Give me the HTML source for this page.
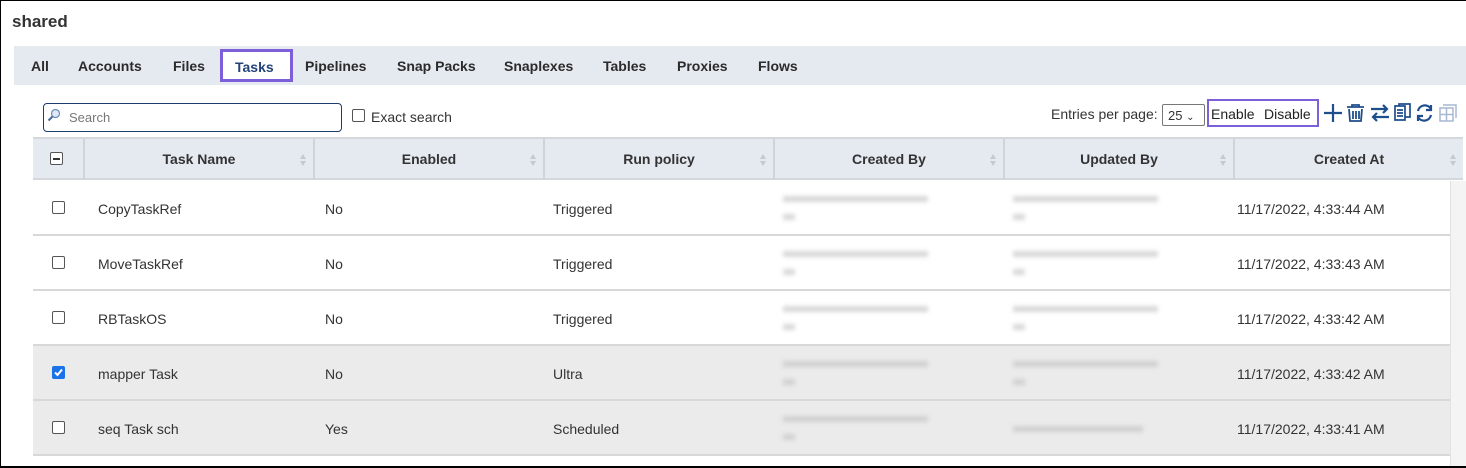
<!DOCTYPE html>
<html><head><style>
*{margin:0;padding:0;box-sizing:border-box}
body{width:1466px;height:468px;overflow:hidden;background:#fff;font-family:"Liberation Sans",sans-serif;color:#333;position:relative}
.a{position:absolute;white-space:nowrap}
.frame{position:absolute;left:0;top:0;width:1466px;height:468px;border:1px solid #000;border-right:none;border-bottom:2px solid #000}
.tabbar{position:absolute;left:14px;top:46px;width:1452px;height:39px;background:#e5e9f0}
.tab{position:absolute;top:58px;font-size:14px;font-weight:bold;color:#2b2b2b}
.hdr{position:absolute;left:33px;top:137px;width:1430px;height:43px;background:#e5e9f0;border-top:2px solid #d4d7dc;border-bottom:2px solid #d4d7dc}
.hc{position:absolute;top:0;height:41px;border-left:2px solid #d0d4da;font-size:14px;font-weight:bold;color:#333;text-align:center;line-height:40px}
.sort{position:absolute;right:6px;top:13px;width:8px;height:16px}
.row{position:absolute;left:33px;width:1417px;height:55px;border-bottom:2px solid #d8d8d8}
.cell{position:absolute;font-size:14px;color:#333;top:20px}
.cb{position:absolute;left:19px;top:20px;width:13px;height:13px;border:1px solid #555;border-radius:2px;background:#fff}
.blur{position:absolute;background:#d8d8d8;filter:blur(2px)}
</style></head><body>
<div class="a" style="left:12px;top:12px;font-size:17px;font-weight:bold;color:#333">shared</div>
<div class="tabbar"></div>
<div class="a" style="left:220px;top:49px;width:73px;height:33px;background:#fff;border:3px solid #7d5fd9"></div>
<div class="a tab" style="left:31px">All</div>
<div class="a tab" style="left:78px">Accounts</div>
<div class="a tab" style="left:173px">Files</div>
<div class="a tab" style="left:235px;top:59px;color:#24437a">Tasks</div>
<div class="a tab" style="left:305px">Pipelines</div>
<div class="a tab" style="left:397px">Snap Packs</div>
<div class="a tab" style="left:504px">Snaplexes</div>
<div class="a tab" style="left:603px">Tables</div>
<div class="a tab" style="left:677px">Proxies</div>
<div class="a tab" style="left:758px">Flows</div>

<div class="a" style="left:43px;top:103px;width:299px;height:29px;border:1px solid #1f3c6e;border-radius:4px"></div>
<svg class="a" style="left:47px;top:108px" width="14" height="14" viewBox="0 0 14 14"><circle cx="8.5" cy="5.5" r="4" fill="#dfe8f5" stroke="#6b8bb8" stroke-width="1.2"/><path d="M5.5 8.5L1.5 12.5" stroke="#4a6a99" stroke-width="2"/></svg>
<div class="a" style="left:69px;top:110px;font-size:13px;color:#777">Search</div>
<div class="a" style="left:352px;top:109px;width:13px;height:13px;border:1px solid #555;border-radius:2px"></div>
<div class="a" style="left:371px;top:109px;font-size:14px;color:#333">Exact search</div>

<div class="a" style="left:1051px;top:106px;font-size:14px;color:#333">Entries per page:</div>
<div class="a" style="left:1162px;top:104px;width:43px;height:22px;border:1px solid #777;border-radius:2px;font-size:13px;padding:3px 0 0 5px">25 <span style="font-size:10px">&#8964;</span></div>
<div class="a" style="left:1207px;top:99px;width:112px;height:28px;border:2px solid #7d5fd9"></div>
<div class="a" style="left:1211px;top:106px;font-size:14px;color:#222">Enable</div>
<div class="a" style="left:1264px;top:106px;font-size:14px;color:#222">Disable</div>
<svg class="a" style="left:1323px;top:103px" width="136" height="20" viewBox="0 0 136 20" fill="none" stroke="#1f4e8c" stroke-width="2.2">
<path d="M10 1V19M1 10H19"/>
<path d="M24 4H41M29 4V2H36V4M26 6L27 18H38L39 6M30 8V16M33 8V16M36 8V16" stroke-width="1.8"/>
<path d="M48 6H64M60 2L64 6L60 10M66 14H50M54 10L50 14L54 18"/>
<path d="M72 3H82V17H72ZM76 3V1H87V14H82M74 7H80M74 10H80M74 13H80" stroke-width="1.7"/>
<path d="M108 6A7 7 0 0 0 95 8M95 14A7 7 0 0 0 108 12M108 2V7H103M95 18V13H100"/>
<path d="M117 5H130V18H117ZM120 2H133V15M123.5 5V18M117 11.5H130" stroke="#a7b8d2" stroke-width="1.5"/>
</svg>

<div class="hdr">
<div class="hc" style="left:0;width:50px;border-left:none"><div style="position:absolute;left:17px;top:13px;width:13px;height:13px;border:1px solid #555;border-radius:2px;background:#fff"><div style="position:absolute;left:2px;top:5px;width:7px;height:1.5px;background:#333"></div></div></div>
<div class="hc" style="left:50px;width:230px">Task Name<svg class="sort" viewBox="0 0 8 16"><path d="M4 2L7 7H1ZM4 14L7 9H1Z" fill="#c5c9cf"/></svg></div>
<div class="hc" style="left:280px;width:230px">Enabled<svg class="sort" viewBox="0 0 8 16"><path d="M4 2L7 7H1ZM4 14L7 9H1Z" fill="#c5c9cf"/></svg></div>
<div class="hc" style="left:510px;width:230px">Run policy<svg class="sort" viewBox="0 0 8 16"><path d="M4 2L7 7H1ZM4 14L7 9H1Z" fill="#c5c9cf"/></svg></div>
<div class="hc" style="left:740px;width:230px">Created By<svg class="sort" viewBox="0 0 8 16"><path d="M4 2L7 7H1ZM4 14L7 9H1Z" fill="#c5c9cf"/></svg></div>
<div class="hc" style="left:970px;width:230px">Updated By<svg class="sort" viewBox="0 0 8 16"><path d="M4 2L7 7H1ZM4 14L7 9H1Z" fill="#c5c9cf"/></svg></div>
<div class="hc" style="left:1200px;width:230px">Created At<svg class="sort" viewBox="0 0 8 16"><path d="M4 2L7 7H1ZM4 14L7 9H1Z" fill="#c5c9cf"/></svg></div>
</div>
<div class="a" style="left:1450px;top:181px;width:16px;height:285px;background:#f4f4f4;border-left:1px solid #e2e2e2"></div>

<div class="row" style="top:181px">
<div class="cb"></div><div class="cell" style="left:65px">CopyTaskRef</div><div class="cell" style="left:292px">No</div><div class="cell" style="left:520px">Triggered</div>
<div class="blur" style="left:750px;top:15px;width:145px;height:6px"></div><div class="blur" style="left:750px;top:33px;width:12px;height:6px"></div>
<div class="blur" style="left:980px;top:15px;width:145px;height:6px"></div><div class="blur" style="left:980px;top:33px;width:12px;height:6px"></div>
<div class="cell" style="left:1204px">11/17/2022, 4:33:44 AM</div></div>
<div class="row" style="top:236px">
<div class="cb"></div><div class="cell" style="left:65px">MoveTaskRef</div><div class="cell" style="left:292px">No</div><div class="cell" style="left:520px">Triggered</div>
<div class="blur" style="left:750px;top:15px;width:145px;height:6px"></div><div class="blur" style="left:750px;top:33px;width:12px;height:6px"></div>
<div class="blur" style="left:980px;top:15px;width:145px;height:6px"></div><div class="blur" style="left:980px;top:33px;width:12px;height:6px"></div>
<div class="cell" style="left:1204px">11/17/2022, 4:33:43 AM</div></div>
<div class="row" style="top:291px">
<div class="cb"></div><div class="cell" style="left:65px">RBTaskOS</div><div class="cell" style="left:292px">No</div><div class="cell" style="left:520px">Triggered</div>
<div class="blur" style="left:750px;top:15px;width:145px;height:6px"></div><div class="blur" style="left:750px;top:33px;width:12px;height:6px"></div>
<div class="blur" style="left:980px;top:15px;width:145px;height:6px"></div><div class="blur" style="left:980px;top:33px;width:12px;height:6px"></div>
<div class="cell" style="left:1204px">11/17/2022, 4:33:42 AM</div></div>
<div class="row" style="top:346px;background:#ebebeb">
<div class="cb" style="background:#1a73e8;border-color:#1a73e8"><svg width="11" height="11" viewBox="0 0 11 11" style="position:absolute;left:0;top:0"><path d="M2 5.5L4.5 8L9 2.5" stroke="#fff" stroke-width="2" fill="none"/></svg></div><div class="cell" style="left:65px">mapper Task</div><div class="cell" style="left:292px">No</div><div class="cell" style="left:520px">Ultra</div>
<div class="blur" style="left:750px;top:15px;width:145px;height:6px;background:#d0d0d0"></div><div class="blur" style="left:750px;top:33px;width:12px;height:6px;background:#d0d0d0"></div>
<div class="blur" style="left:980px;top:15px;width:145px;height:6px;background:#d0d0d0"></div><div class="blur" style="left:980px;top:33px;width:12px;height:6px;background:#d0d0d0"></div>
<div class="cell" style="left:1204px">11/17/2022, 4:33:42 AM</div></div>
<div class="row" style="top:401px;background:#ebebeb">
<div class="cb"></div><div class="cell" style="left:65px">seq Task sch</div><div class="cell" style="left:292px">Yes</div><div class="cell" style="left:520px">Scheduled</div>
<div class="blur" style="left:750px;top:15px;width:145px;height:6px;background:#d0d0d0"></div><div class="blur" style="left:750px;top:33px;width:12px;height:6px;background:#d0d0d0"></div>
<div class="blur" style="left:980px;top:25px;width:130px;height:6px;background:#d0d0d0"></div>
<div class="cell" style="left:1204px">11/17/2022, 4:33:41 AM</div></div>
<div class="frame"></div>
</body></html>
